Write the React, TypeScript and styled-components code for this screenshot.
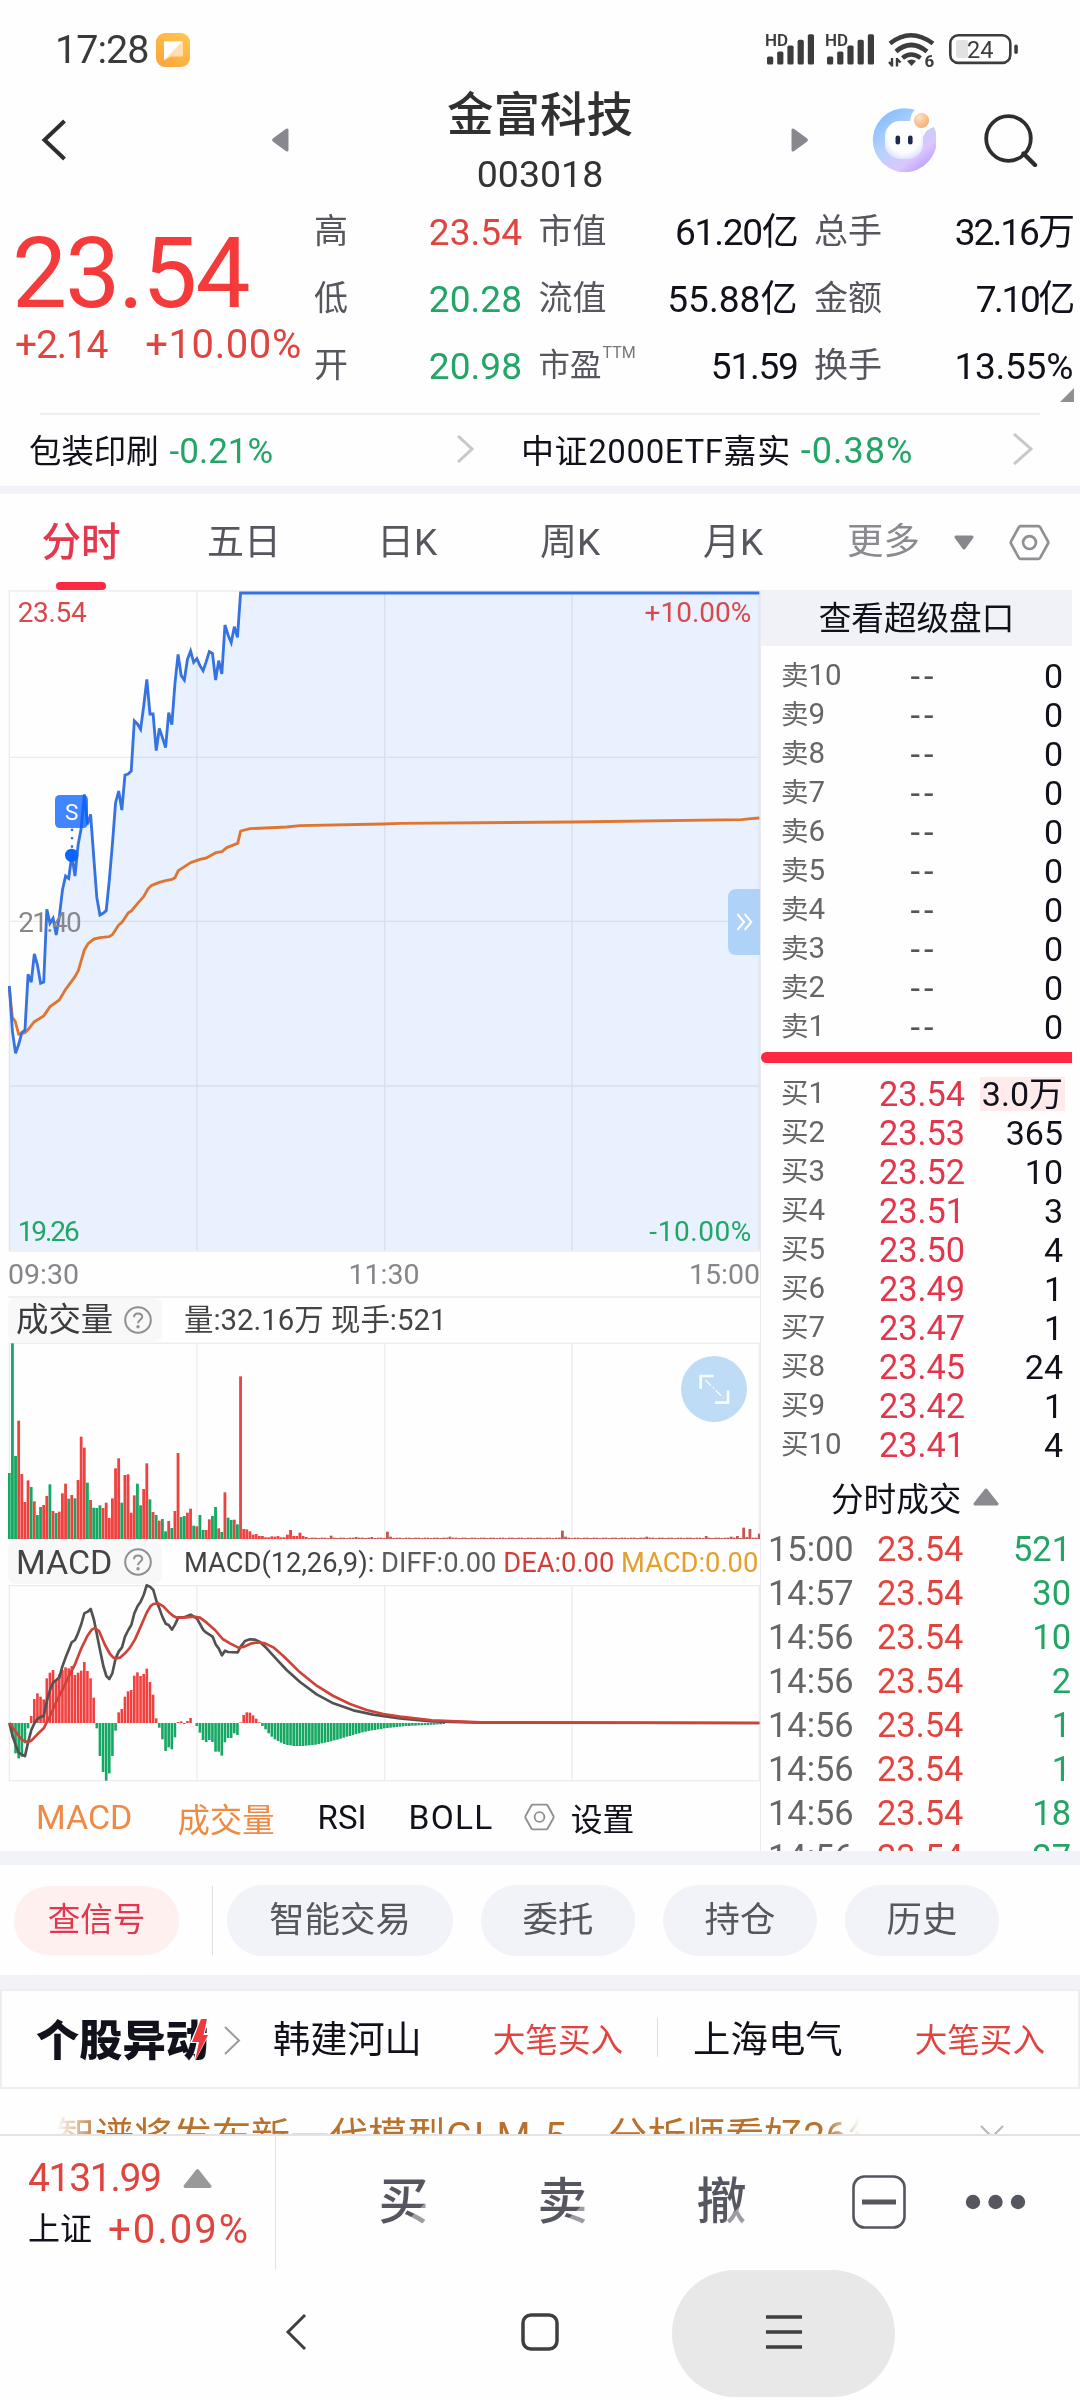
import React from "react";
import styled, { createGlobalStyle } from "styled-components";

const RED = "#e0443f";
const GREEN = "#22a565";
const INK = "#11111c";
const GREY = "#56575e";
const HOT = "#fd2842";
const BAND = "#f2f3f8";

const Global = createGlobalStyle`
  * { box-sizing: border-box; }
  body { margin: 0; background: #fff; font-family: Roboto, "Noto Sans CJK SC", sans-serif; color: ${INK}; }
  svg { display: block; flex: none; }
`;

const Screen = styled.div`
  width: 1080px;
  height: 2400px;
  overflow: hidden;
  display: flex;
  flex-direction: column;
  background: #fefefe;
`;

const Text = styled.span<{ $size: number; $color?: string; $ls?: number; $weight?: number; $ml?: number }>`
  font-size: ${(p) => p.$size}px;
  color: ${(p) => p.$color ?? INK};
  letter-spacing: ${(p) => p.$ls ?? 0}px;
  font-weight: ${(p) => p.$weight ?? 400};
  margin-left: ${(p) => p.$ml ?? 0}px;
  white-space: pre;
`;

const Gap = styled.div<{ $h: number }>`
  height: ${(p) => p.$h}px;
  flex: none;
  background: ${BAND};
`;

/* ---------- status bar ---------- */
const StatusBar = styled.header`
  height: 75px;
  flex: none;
  display: flex;
  align-items: center;
  justify-content: space-between;
  padding: 24px 62px 0 55px;
`;
const StatusSide = styled.div`
  display: flex;
  align-items: center;
`;
const StatusIcons = styled.svg`
  overflow: visible;
`;

const Signal = ({ x }: { x: number }) => (
  <g transform={`translate(${x} 0)`} fill="#3c3c3c">
    <text x="0" y="13.5" fontSize="17" fontWeight="600" textLength="23" fontFamily="Roboto, sans-serif">HD</text>
    {[8, 13, 19, 24.8, 30.4].map((h, i) => (
      <rect key={i} x={2 + i * 10.2} y={32.6 - h} width="6.2" height={h} rx="1.6" />
    ))}
  </g>
);

/* ---------- title bar ---------- */
const TitleBar = styled.nav`
  height: 124px;
  flex: none;
  display: grid;
  grid-template-columns: 271px 18px 502px 18px 271px;
`;
const IconCell = styled.div<{ $pl?: number }>`
  display: flex;
  align-items: center;
  padding: 6px 0 0 ${(p) => p.$pl ?? 0}px;
`;
const TitleBlock = styled.div`
  display: flex;
  flex-direction: column;
  align-items: center;
  padding-top: 10px;
`;
const Title = styled.h1`
  margin: 0;
  font-size: 46.5px;
  line-height: 60px;
  font-weight: 500;
  color: #303030;
`;
const Code = styled.div`
  margin-top: 4px;
  font-size: 37.5px;
  line-height: 50px;
  color: #333;
`;

/* ---------- quote ---------- */
const Quote = styled.section`
  position: relative;
  height: 214px;
  flex: none;
  display: flex;
`;
const PriceBlock = styled.div`
  width: 314px;
  padding: 25px 0 0 12px;
`;
const BigPrice = styled.div`
  font-size: 98px;
  line-height: 100px;
  letter-spacing: -1.9px;
  color: #f43a3a;
`;
const Changes = styled.div`
  display: flex;
  line-height: 42px;
  padding-left: 3px;
`;
const Stats = styled.div`
  display: grid;
  grid-template-columns: 208px 259px 259px;
  grid-auto-rows: 67px;
  column-gap: 16.5px;
`;
const Stat = styled.div`
  display: flex;
  align-items: center;
  justify-content: space-between;
  line-height: 42px;
`;
const StatLabel = styled.span`
  padding-top: 3px;
`;
const StatValue = styled.span<{ $color: string; $ls: number }>`
  font-size: 37.1px;
  color: ${(p) => p.$color};
  letter-spacing: ${(p) => p.$ls}px;
`;
const Sup = styled.sup`
  font-size: 16px;
  line-height: 0;
  vertical-align: 18px;
  color: #777;
  margin-left: 1px;
`;
const Corner = styled.svg`
  position: absolute;
  right: 6px;
  bottom: 11px;
`;
const Sectors = styled.section`
  height: 73px;
  flex: none;
  display: flex;
  align-items: center;
  margin: 0 40px;
  padding-bottom: 4px;
  border-top: 2px solid #efeff1;
`;
const Sector = styled.div<{ $w: number }>`
  width: ${(p) => p.$w}px;
  flex: none;
  display: flex;
  align-items: center;
  justify-content: space-between;
`;

/* ---------- period tabs ---------- */
const Tabs = styled.nav`
  height: 96px;
  flex: none;
  display: flex;
  align-items: center;
`;
const Tab = styled.div<{ $on?: boolean }>`
  position: relative;
  width: 163px;
  height: 96px;
  line-height: 98px;
  text-align: center;
  font-size: ${(p) => (p.$on ? 39.6 : 37)}px;
  font-weight: ${(p) => (p.$on ? 500 : 400)};
  color: ${(p) => (p.$on ? "#e53850" : GREY)};
  padding-right: 1px;
  &::after {
    content: "";
    display: ${(p) => (p.$on ? "block" : "none")};
    position: absolute;
    left: 56px;
    bottom: 0;
    width: 50px;
    height: 8px;
    border-radius: 4px;
    background: ${HOT};
  }
`;
const More = styled.div`
  display: flex;
  align-items: center;
  padding-left: 32px;
  color: #8a8a90;
  font-size: 36.5px;
  line-height: 96px;
`;

/* ---------- main ---------- */
const Main = styled.main`
  height: 1261px;
  flex: none;
  display: flex;
  overflow: hidden;
`;
const Charts = styled.section`
  width: 761px;
  flex: none;
  padding-left: 8px;
  border-right: 1px solid #ebebee;
`;
const TimeAxis = styled.div`
  height: 46px;
  display: flex;
  align-items: center;
  justify-content: space-between;
  border-bottom: 2px solid #f0f0f0;
  font-size: 28.5px;
  color: #85858a;
`;
const ChartHead = styled.div<{ $h: number }>`
  height: ${(p) => p.$h}px;
  display: flex;
  align-items: center;
  white-space: pre;
  line-height: 40px;
`;
const HeadChip = styled.div`
  width: 154px;
  height: 100%;
  display: flex;
  align-items: center;
  justify-content: space-between;
  padding: 0 10px 1px 8px;
  margin-right: 22px;
  border-radius: 8px;
  background: #f8f8f8;
`;
const Indicators = styled.div`
  height: 68px;
  display: flex;
  align-items: center;
  padding-left: 28px;
`;

/* ---------- order book ---------- */
const Book = styled.aside`
  width: 311px;
  overflow: hidden;
`;
const BookHead = styled.div`
  height: 56px;
  line-height: 58px;
  text-align: center;
  font-size: 32.6px;
  background: #f1f2f7;
  margin-bottom: 9px;
`;
const Level = styled.div`
  height: 39px;
  display: grid;
  grid-template-columns: 77px 128px minmax(0, 1fr);
  align-items: center;
  padding: 0 7px 0 20px;
  line-height: 40px;
`;
const LevelName = styled.span`
  font-size: 27.5px;
  color: #666;
  white-space: nowrap;
`;
const LevelNo = styled.span`
  font-size: 29.5px;
`;
const LevelPrice = styled.span<{ $empty?: boolean }>`
  text-align: center;
  font-size: 34.3px;
  letter-spacing: ${(p) => (p.$empty ? 4 : 0)}px;
  padding-left: ${(p) => (p.$empty ? 4 : 0)}px;
  color: ${(p) => (p.$empty ? "#555" : "#e2364c")};
`;
const LevelQty = styled.span<{ $hl?: boolean }>`
  justify-self: end;
  font-size: 34px;
  line-height: 34px;
  padding: 0 2px;
  white-space: nowrap;
  background: ${(p) => (p.$hl ? "#ffebec" : "transparent")};
`;
const Bar = styled.div`
  height: 11px;
  margin: 7px 0 10px;
  border-radius: 6px 0 0 6px;
  background: ${HOT};
`;
const TicksHead = styled.div`
  height: 63px;
  padding: 4px 0 0 70px;
  display: flex;
  align-items: center;
  font-size: 32.6px;
`;
const Tick = styled.div`
  height: 44px;
  display: grid;
  grid-template-columns: 109px 92px 1fr;
  align-items: center;
  padding: 2px 1px 0 7px;
  font-size: 34.4px;
  line-height: 42px;
`;

/* ---------- shortcuts ---------- */
const Shortcuts = styled.section`
  height: 110px;
  flex: none;
  display: flex;
  align-items: center;
  padding-left: 14px;
`;
const Pill = styled.div<{ $w: number; $hot?: boolean; $mr?: number }>`
  width: ${(p) => p.$w}px;
  height: ${(p) => (p.$hot ? 69 : 71)}px;
  line-height: ${(p) => (p.$hot ? 68 : 70)}px;
  margin-right: ${(p) => p.$mr ?? 28}px;
  border-radius: 36px;
  text-align: center;
  font-size: ${(p) => (p.$hot ? 32.6 : 35.4)}px;
  color: ${(p) => (p.$hot ? "#e2374c" : GREY)};
  background: ${(p) => (p.$hot ? "#fff0f0" : BAND)};
`;
const VRule = styled.div<{ $h: number; $m: string }>`
  width: 1px;
  height: ${(p) => p.$h}px;
  margin: ${(p) => p.$m};
  background: #dedee2;
`;

/* ---------- movers ---------- */
const Movers = styled.section`
  height: 100px;
  flex: none;
  display: flex;
  align-items: center;
  padding: 0 0 4px 34px;
  border: 2px solid #eeeeef;
`;
const MoversLogo = styled.div`
  position: relative;
  width: 174px;
  font-size: 43.2px;
  font-weight: 900;
  white-space: nowrap;
  color: #12121d;
`;
const Bolt = styled.svg`
  position: absolute;
  right: 0;
  top: 7px;
`;

const News = styled.section`
  height: 45px;
  flex: none;
  display: flex;
  align-items: flex-start;
  overflow: hidden;
`;
const NewsText = styled.div`
  width: 804px;
  margin-left: 56px;
  line-height: 97px;
  font-size: 39px;
  color: #b8722d;
  white-space: nowrap;
  overflow: hidden;
  mask-image: linear-gradient(90deg, transparent 0, #000 44px, #000 770px, transparent 804px);
`;
const Model = styled.span`
  letter-spacing: 1.5px;
`;
const NewsClose = styled.svg`
  margin: 35px 0 0 119px;
`;

/* ---------- bottom bar ---------- */
const BottomBar = styled.footer`
  height: 136px;
  flex: none;
  display: flex;
  border-top: 2px solid #e4e4e6;
`;
const IndexBox = styled.div`
  width: 276px;
  padding: 17px 0 0 28px;
  border-right: 1px solid #e2e2e4;
`;
const IndexLine = styled.div`
  height: 51px;
  line-height: 51px;
  display: flex;
  align-items: center;
  white-space: pre;
`;
const Actions = styled.div`
  flex: 1;
  display: flex;
  align-items: center;
  padding: 0 0 2px 48px;
`;
const Action = styled.div`
  width: 159px;
  text-align: center;
  font-size: 50px;
  line-height: 60px;
  font-weight: 500;
`;
const ActionGlyph = styled.span`
  color: transparent;
  background: linear-gradient(135deg, #55565f 70%, #9c9ca2 71%);
  background-clip: text;
  -webkit-background-clip: text;
`;
const SystemNav = styled.div`
  height: 130px;
  flex: none;
  display: flex;
  align-items: flex-start;
  overflow: hidden;
`;
const NavCell = styled.div<{ $ml: number; $w: number; $on?: boolean }>`
  width: ${(p) => p.$w}px;
  height: 127px;
  padding-bottom: 3px;
  margin-left: ${(p) => p.$ml}px;
  display: flex;
  align-items: center;
  justify-content: center;
  border-radius: 64px;
  background: ${(p) => (p.$on ? "#e8e8e8" : "transparent")};
`;

/* ---------- small drawings ---------- */
const Chevron = ({ w, h, color = "#c8c8cc", sw = 3 }: { w: number; h: number; color?: string; sw?: number }) => (
  <svg width={w} height={h} viewBox={`0 0 ${w} ${h}`} fill="none" stroke={color} strokeWidth={sw}>
    <path d={`M2 1 L${w - 2} ${h / 2} L2 ${h - 1}`} />
  </svg>
);
const Hexagon = ({ w, h, sw, ml = 0 }: { w: number; h: number; sw: number; ml?: number }) => (
  <svg width={w} height={h} viewBox="0 0 40 36" fill="none" stroke="#8f8f94" strokeWidth={sw} strokeLinejoin="round" style={{ marginLeft: ml }}>
    <path d="M11.5 2 H28.5 Q29.8 2 30.5 3.2 L38 16.8 Q38.6 18 38 19.2 L30.5 32.8 Q29.8 34 28.5 34 H11.5 Q10.2 34 9.5 32.8 L2 19.2 Q1.4 18 2 16.8 L9.5 3.2 Q10.2 2 11.5 2Z" />
    <circle cx="20" cy="18" r="6.3" />
  </svg>
);
const Help = () => (
  <svg width="28" height="28" viewBox="0 0 28 28" fill="none" stroke="#8f8f94" strokeWidth="2">
    <circle cx="14" cy="14" r="12.8" />
    <path d="M10 11.2 C10 8.6 11.8 7.4 14 7.4 C16.4 7.4 18.2 8.9 18.2 11 C18.2 13.6 14 14 14 17.2" />
    <circle cx="14" cy="20.8" r="0.7" fill="#8f8f94" />
  </svg>
);
const Up = ({ w, h, ml, color = "#8a8a90" }: { w: number; h: number; ml: number; color?: string }) => (
  <svg width={w} height={h} viewBox="0 0 26 18" style={{ marginLeft: ml }}>
    <path d="M13 2 L24 16 H2Z" fill={color} stroke={color} strokeWidth="3" strokeLinejoin="round" />
  </svg>
);

/* ---------- chart data: one sample a minute, three units a pixel ---------- */
const X0 = 28;
const STEP = 9.375;
const at = (i: number) => X0 + STEP * i;

const PRICE = [
  1218, 1355, 1420, 1393, 1358, 1350, 1183, 1207, 1122, 1155, 1210, 1206, 988, 1030, 1015, 1065, 1010, 930, 888, 895, 825,
  888, 795, 745, 643, 733, 703, 830, 953, 1005, 1000, 992, 900, 790, 668, 633, 690, 585, 582, 573, 423, 432, 448, 378, 298,
  402, 402, 512, 445, 473, 503, 398, 434, 310, 223, 287, 300, 238, 213, 247, 236, 257, 272, 245, 215, 220, 300, 242, 282,
  135, 165, 188, 140, 172, 39,
];
const AVG: [number, number][] = [
  [28, 1225], [37, 1312], [46, 1325], [56, 1363], [75, 1358], [85, 1348], [103, 1325], [131, 1308], [150, 1280], [178, 1260],
  [197, 1228], [225, 1190], [235, 1172], [253, 1110], [265, 1090], [282, 1077], [300, 1073], [328, 1070], [338, 1063],
  [356, 1035], [366, 1027], [385, 998], [394, 993], [413, 970], [431, 950], [443, 928], [455, 916], [478, 907], [497, 902],
  [516, 898], [525, 893], [535, 872], [572, 848], [600, 838], [619, 834], [647, 818], [666, 815], [680, 803], [713, 790],
  [722, 753], [750, 746], [860, 741], [900, 737], [1150, 732], [1200, 730], [1716, 726], [2225, 719], [2253, 716], [2278, 714],
];
const VOLUME =
  "g429 g40 g378 r272 r432 r516 r451 g471 r514 g555 g531 r525 r498 g463 r543 g549 r545 r490 r461 g506 r495 g505 r450 r320 r353 g458 r510 g533 g534 g526 r534 r518 r564 r505 r415 r385 g518 r435 r433 r548 r496 g461 g526 r477 r400 g508 r546 g555 r572 g567 g604 r573 g594 r543 r369 g561 g558 r548 r536 g587 r589 g555 g600 r600 r568 g558 g531 r595 g606 r487 g563 g570 r569 g583 r139 r597 r598 r604 r614 r612 r618 r618 r622 r622 r619 r620 r618 r622 r622 r614 r600 r618 r618 r608 r618 r621"
    .split(" ");
const LATE_VOLUME: Record<number, number> = {
  103: 617, 111: 621, 116: 621, 121: 605, 122: 620, 141: 620, 177: 602, 178: 620, 204: 620, 223: 618, 231: 620, 233: 618,
  235: 593, 236: 621, 237: 597, 240: 611,
};
const DIFF: [number, number][] = [
  [28, 1179], [37, 1215], [47, 1245], [56, 1268], [66, 1274], [75, 1278], [84, 1238], [94, 1200], [103, 1180], [112, 1167],
  [122, 1161], [131, 1158], [140, 1115], [150, 1080], [159, 1058], [169, 1050], [178, 1042], [187, 1010], [197, 982],
  [206, 960], [215, 937], [225, 930], [234, 910], [244, 882], [253, 850], [263, 845], [272, 837], [282, 870], [291, 915],
  [300, 960], [310, 1008], [319, 1038], [328, 1047], [337, 1030], [347, 985], [356, 965], [366, 952], [375, 920],
  [385, 900], [394, 885], [403, 850], [413, 828], [422, 815], [431, 795], [440, 766], [450, 770], [460, 780], [469, 812],
  [478, 835], [487, 860], [497, 881], [506, 885], [516, 899], [525, 884], [535, 862], [553, 862], [572, 854], [591, 866],
  [610, 900], [619, 908], [638, 920], [647, 943], [656, 955], [666, 976], [675, 962], [684, 966], [713, 967], [722, 950],
  [735, 933], [750, 928], [765, 929], [780, 936], [800, 955], [830, 988], [860, 1020], [900, 1056], [950, 1093],
  [1000, 1120], [1060, 1141], [1120, 1154], [1200, 1165], [1296, 1174], [1443, 1178], [2278, 1179],
];
const DEA: [number, number][] = [
  [28, 1179], [47, 1205], [66, 1230], [84, 1237], [94, 1232], [112, 1213], [131, 1195], [150, 1158], [169, 1115],
  [187, 1080], [206, 1040], [225, 1003], [244, 955], [262, 918], [275, 899], [285, 894], [297, 903], [315, 945], [330, 972],
  [340, 983], [348, 985], [360, 983], [375, 970], [390, 953], [405, 928], [422, 890], [440, 848], [452, 828], [460, 822],
  [475, 820], [490, 829], [505, 845], [520, 858], [530, 863], [550, 863], [580, 860], [600, 863], [620, 878], [645, 900],
  [668, 927], [690, 940], [715, 953], [730, 951], [755, 940], [775, 937], [795, 940], [820, 952], [850, 978], [900, 1027],
  [950, 1067], [1000, 1098], [1050, 1122], [1100, 1140], [1150, 1152], [1200, 1160], [1296, 1171], [1443, 1177], [2278, 1179],
];
const HIST = [
  1179, 1222, 1270, 1285, 1280, 1240, 1195, 1158, 1107, 1090, 1100, 1108, 1045, 1028, 1020, 1050, 1033, 1020, 1012, 1015,
  1008, 1035, 1028, 1022, 996, 1023, 1045, 1103, 1195, 1278, 1326, 1352, 1330, 1278, 1202, 1147, 1137, 1100, 1084, 1080,
  1037, 1027, 1038, 1032, 1016, 1056, 1094, 1165, 1193, 1228, 1263, 1252, 1258, 1222, 1176, 1174, 1182, 1173, 1164, 1179,
  1188, 1208, 1230, 1236, 1230, 1236, 1265, 1265, 1277, 1237, 1224, 1224, 1210, 1215, 1177, 1155, 1147, 1148, 1156, 1166,
  1177, 1188, 1198, 1210, 1220, 1228, 1233, 1238, 1242, 1245, 1246, 1248, 1248, 1248, 1248, 1247, 1246, 1245, 1244, 1242,
  1240, 1238, 1236, 1234, 1231, 1229, 1226, 1223, 1220, 1218, 1215, 1212, 1210, 1207, 1205, 1203, 1201, 1200, 1198, 1197,
  1195, 1194, 1193, 1192, 1191, 1190, 1189, 1188, 1188, 1187, 1187, 1186, 1186, 1185, 1185, 1184, 1184, 1183, 1183, 1182,
];
const ZERO = 1179;

const path = (pts: [number, number][]) => "M" + pts.map((p) => p.join(" ")).join("L");
const pricePts: [number, number][] = [...PRICE.map((y, i): [number, number] => [at(i), y]), [2278, 39]];

const Grid = ({ top, bottom, rows = [] }: { top: number; bottom: number; rows?: number[] }) => (
  <g stroke="#ececee" strokeWidth="4" fill="none">
    <rect x="28" y={top} width="2250" height={bottom - top} />
    {[591, 1154, 1716].map((x) => (
      <path key={x} d={`M${x} ${top}V${bottom}`} />
    ))}
    {rows.map((y) => (
      <path key={y} d={`M28 ${y}H2278`} />
    ))}
  </g>
);

const PriceChart = () => (
  <svg width="752" height="662" viewBox="24 30 2256 1986" fontFamily="Roboto, sans-serif" fontSize="84">
    <path d={path(pricePts) + "L2278 2010 28 2010Z"} fill="#e9f1fe" />
    <g style={{ mixBlendMode: "multiply" }}>
      <Grid top={33} bottom={2013} rows={[532, 1024, 1518]} />
    </g>
    <path d={path(AVG)} fill="none" stroke="#e0752f" strokeWidth="8.5" strokeLinejoin="round" />
    <path d={path(pricePts)} fill="none" stroke="#3572e2" strokeWidth="8.5" />
    <text x="55" y="1056" fill="#88888c" textLength="190">21.40</text>
    <rect x="165" y="645" width="99" height="99" rx="14" fill="#0c63ff" opacity="0.78" />
    <path d="M216 746V806" stroke="#2a6ff0" strokeWidth="7" strokeDasharray="7 18" />
    <circle cx="215" cy="826" r="20" fill="#0a64ff" />
    <text x="215" y="719" fill="#fff" fontSize="68" textAnchor="middle">S</text>
    <text x="53" y="126" fill="#d9484a" textLength="207">23.54</text>
    <text x="2254" y="126" fill="#d9484a" textAnchor="end">+10.00%</text>
    <text x="53" y="1983" fill={GREEN} textLength="186">19.26</text>
    <text x="1948" y="1983" fill={GREEN} textLength="306">-10.00%</text>
    <path d="M2280 927H2210Q2184 927 2184 953V1099Q2184 1125 2210 1125H2280Z" fill="#aed2f8" />
    <path d="M2212 1002L2232 1026 2212 1050M2234 1002L2254 1026 2234 1050" fill="none" stroke="#fff" strokeWidth="6" />
  </svg>
);

const VolumeChart = () => (
  <svg width="752" height="199" viewBox="24 36 2256 597">
    <Grid top={40} bottom={626} />
    {Array.from({ length: 241 }, (_, i) => {
      const item = VOLUME[i];
      const y = item ? Number(item.slice(1)) : LATE_VOLUME[i] ?? 623 + (i % 3 === 0 ? 1 : 0);
      const green = item?.[0] === "g";
      return <rect key={i} x={at(i) - 4.3} y={y} width="8.4" height={627 - y} fill={green ? "#14a862" : i > 95 ? "#c9534f" : "#ef413f"} />;
    })}
    <circle cx="2142" cy="177" r="99" fill="#bfdcf6" />
    <g stroke="#fff" strokeOpacity="0.9" fill="none" strokeWidth="8">
      <path d="M2102 176V138H2141" />
      <path d="M2184 181V218H2145" />
      <path d="M2116 150L2170 204" strokeWidth="4" strokeDasharray="24 7 5 7" />
    </g>
  </svg>
);

const MacdChart = () => (
  <svg width="752" height="199" viewBox="24 762 2256 597">
    <Grid top={767} bottom={1352} />
    {HIST.map((y, i) => (
      <rect key={i} x={at(i) - 4} y={Math.min(y, ZERO)} width="7.8" height={Math.abs(y - ZERO)} fill={y < ZERO ? "#f2403f" : "#14a862"} />
    ))}
    <path d={path(DIFF)} fill="none" stroke="#525252" strokeWidth="8" strokeLinejoin="round" />
    <path d={path(DEA)} fill="none" stroke="#cf423a" strokeWidth="8" strokeLinejoin="round" />
  </svg>
);

/* ---------- table data ---------- */
const STATS: [string, string, string, number][] = [
  ["高", "23.54", RED, 0],
  ["市值", "61.20亿", INK, -1.3],
  ["总手", "32.16万", INK, -2],
  ["低", "20.28", GREEN, 0],
  ["流值", "55.88亿", INK, 0],
  ["金额", "7.10亿", INK, -2.4],
  ["开", "20.98", GREEN, 0],
  ["市盈", "51.59", INK, -1.3],
  ["换手", "13.55%", INK, -0.3],
];
const SELLS = [10, 9, 8, 7, 6, 5, 4, 3, 2, 1];
const BUYS: [string, string][] = [
  ["23.54", "3.0万"], ["23.53", "365"], ["23.52", "10"], ["23.51", "3"], ["23.50", "4"],
  ["23.49", "1"], ["23.47", "1"], ["23.45", "24"], ["23.42", "1"], ["23.41", "4"],
];
const TICKS: [string, string][] = [
  ["15:00", "521"], ["14:57", "30"], ["14:56", "10"], ["14:56", "2"],
  ["14:56", "1"], ["14:56", "1"], ["14:56", "18"], ["14:56", "27"],
];

const Right = styled.span<{ $color: string }>`
  color: ${(p) => p.$color};
  justify-self: end;
`;
const Cell = styled.span<{ $color: string }>`
  color: ${(p) => p.$color};
`;

export default function App() {
  return (
    <Screen>
      <Global />
      <StatusBar>
        <StatusSide>
          <Text $size={39.5} $color="#3a3a3a" $ls={-1}>17:28</Text>
          <svg width="34" height="34" viewBox="0 0 34 34" style={{ marginLeft: 8 }}>
            <defs>
              <linearGradient id="note" x1="1" y1="0" x2="0.3" y2="1">
                <stop offset="0" stopColor="#ffc94f" />
                <stop offset="1" stopColor="#fda63c" />
              </linearGradient>
            </defs>
            <rect width="34" height="34" rx="9" fill="url(#note)" />
            <path d="M8 8.5H26Q27 8.5 27 9.5V22.500Q27 23.500 26 23.500H15L9.500 26.500Q8 27 8 25.500Z" fill="#ffdfae" />
            <path d="M8 8.500H26L9 26.500Q8 27 8 25.500Z" fill="#fff" />
          </svg>
        </StatusSide>
        <StatusIcons width="254" height="44" viewBox="0 -4 254 44">
          <Signal x={1} />
          <Signal x={61} />
          <g fill="none" stroke="#3c3c3c" strokeWidth="4.6">
            <path d="M126 11.500Q146.500 -5 169 11.500" />
            <path d="M132 19.500Q147 6.500 163 19.500" />
            <path d="M138.500 26Q147 19 156.500 26" />
            <path d="M128 26V34.500M128.500 34L125 30M133 34.500V26M132.500 26.500L136.500 30.500" strokeWidth="2.400" />
          </g>
          <path d="M143 29Q147.500 26 152 29L147.500 34Z" fill="#3c3c3c" />
          <text x="160.500" y="35" fontSize="17" fontWeight="700" fill="#3c3c3c" fontFamily="Roboto, sans-serif">6</text>
          <rect x="186.300" y="3.300" width="60" height="27.600" rx="8" fill="none" stroke="#3c3c3c" strokeWidth="2.600" />
          <rect x="192" y="8" width="12" height="18" rx="2" fill="#e2e2e2" />
          <rect x="250.300" y="12.500" width="3.500" height="9.500" rx="1.700" fill="#3c3c3c" />
          <text x="203" y="25.600" fontSize="23.500" fill="#3c3c3c" fontFamily="Roboto, sans-serif">24</text>
        </StatusIcons>
      </StatusBar>

      <TitleBar>
        <IconCell $pl={41}>
          <svg width="27" height="42" viewBox="0 0 27 42" fill="none" stroke="#2e2e2e" strokeWidth="4">
            <path d="M23.500 2L3.500 21L23.500 40" />
          </svg>
        </IconCell>
        <IconCell>
          <svg width="18" height="26" viewBox="0 0 18 26">
            <path d="M16 3V23L3 13.500Q2.300 13 3 12.500Z" fill="#88878d" stroke="#88878d" strokeWidth="3" strokeLinejoin="round" />
          </svg>
        </IconCell>
        <TitleBlock>
          <Title>金富科技</Title>
          <Code>003018</Code>
        </TitleBlock>
        <IconCell>
          <svg width="18" height="26" viewBox="0 0 18 26">
            <path d="M2 3V23L15 13.500Q15.700 13 15 12.500Z" fill="#88878d" stroke="#88878d" strokeWidth="3" strokeLinejoin="round" />
          </svg>
        </IconCell>
        <IconCell $pl={63}>
          <svg width="64" height="64" viewBox="0 0 64 64">
            <defs>
              <linearGradient id="ring" x1="0.1" y1="0.1" x2="0.75" y2="0.95">
                <stop offset="0" stopColor="#86bdfd" />
                <stop offset="0.450" stopColor="#b5d3fd" />
                <stop offset="0.800" stopColor="#dcc6fc" />
                <stop offset="1" stopColor="#c0a6ff" />
              </linearGradient>
              <radialGradient id="face" cx="0.5" cy="0.400" r="0.650">
                <stop offset="0.650" stopColor="#fff" />
                <stop offset="1" stopColor="#d6dffc" />
              </radialGradient>
              <radialGradient id="ball" cx="0.350" cy="0.300" r="0.800">
                <stop offset="0" stopColor="#ffe0c4" />
                <stop offset="1" stopColor="#f9a869" />
              </radialGradient>
            </defs>
            <path d="M43 1.800A32 32 0 1 0 62 19Q54 21 51 29L38 13Q39 5 43 1.800Z" fill="url(#ring)" />
            <circle cx="49.500" cy="12.500" r="10" fill="#fff" />
            <rect x="13" y="13" width="38" height="38" rx="15" fill="url(#face)" />
            <circle cx="49.500" cy="12.500" r="7.600" fill="url(#ball)" />
            <rect x="23.500" y="27.500" width="4.600" height="9" rx="2.300" fill="#1f2b4d" />
            <rect x="36" y="27.500" width="4.600" height="9" rx="2.300" fill="#1f2b4d" />
          </svg>
          <svg width="54" height="54" viewBox="0 0 54 54" fill="none" stroke="#2e2e2e" strokeWidth="3.800" style={{ marginLeft: 48 }}>
            <circle cx="24.500" cy="25.500" r="22.300" />
            <path d="M39.500 40.500L51 52" strokeLinecap="round" strokeWidth="4.400" />
          </svg>
        </IconCell>
      </TitleBar>

      <Quote>
        <PriceBlock>
          <BigPrice>23.54</BigPrice>
          <Changes>
            <Text $size={39} $color={RED} $ls={-1.2}>+2.14</Text>
            <Text $size={40} $color={RED} $ml={38} $ls={0.6}>+10.00%</Text>
          </Changes>
        </PriceBlock>
        <Stats>
          {STATS.map(([label, value, color, ls]) => (
            <Stat key={value}>
              <StatLabel>
                <Text $size={label === "市盈" ? 31.5 : 34} $color={GREY}>{label}</Text>
                {label === "市盈" && <Sup>TTM</Sup>}
              </StatLabel>
              <StatValue $color={color} $ls={ls}>{value}</StatValue>
            </Stat>
          ))}
        </Stats>
        <Corner width="14" height="14"><path d="M14 0V14H0Z" fill="#8f8f94" /></Corner>
      </Quote>
      <Sectors>
        <Sector $w={434}>
          <span>
            <Text $size={32.4} $ml={-11}>包装印刷</Text>
            <Text $size={35} $color={GREEN} $ml={11}>-0.21%</Text>
          </span>
          <Chevron w={18} h={28} />
        </Sector>
        <Sector $w={559}>
          <span>
            <Text $size={33} $ml={47} $ls={0.6}>中证2000ETF嘉实</Text>
            <Text $size={36} $color={GREEN} $ml={10} $ls={1}>-0.38%</Text>
          </span>
          <Chevron w={21} h={32} />
        </Sector>
      </Sectors>
      <Gap $h={8} />

      <Tabs>
        <Tab $on>分时</Tab>
        <Tab>五日</Tab>
        <Tab>日K</Tab>
        <Tab>周K</Tab>
        <Tab>月K</Tab>
        <More>
          更多
          <svg width="20" height="15" viewBox="0 0 20 15" style={{ marginLeft: 34 }}>
            <path d="M2 2H18L10 13Z" fill="#88878d" stroke="#88878d" strokeWidth="3" strokeLinejoin="round" />
          </svg>
          <Hexagon w={41} h={37} sw={2.6} ml={35} />
        </More>
      </Tabs>

      <Main>
        <Charts>
          <PriceChart />
          <TimeAxis>
            <span>09:30</span>
            <span>11:30</span>
            <span>15:00</span>
          </TimeAxis>
          <ChartHead $h={44}>
            <HeadChip>
              <Text $size={32.4} $color="#3c3c40">成交量</Text>
              <Help />
            </HeadChip>
            <Text $size={29.4} $color="#444">量:32.16万 现手:521</Text>
          </ChartHead>
          <VolumeChart />
          <ChartHead $h={43}>
            <HeadChip>
              <Text $size={34} $color="#444">MACD</Text>
              <Help />
            </HeadChip>
            <Text $size={27.3} $color="#444">MACD(12,26,9): </Text>
            <Text $size={27.3} $color="#5c5c5c">DIFF:0.00 </Text>
            <Text $size={27.3} $color="#d23f3b">DEA:0.00 </Text>
            <Text $size={27.3} $color="#e4a02c">MACD:0.00</Text>
          </ChartHead>
          <MacdChart />
          <Indicators>
            <Text $size={34} $color="#ef8a45">MACD</Text>
            <Text $size={32.4} $color="#ef8a45" $ml={45}>成交量</Text>
            <Text $size={33} $ml={43}>RSI</Text>
            <Text $size={33.5} $ml={42} $ls={1.3}>BOLL</Text>
            <Hexagon w={31} h={28} sw={2.4} ml={30} />
            <Text $size={31.8} $ml={16}>设置</Text>
          </Indicators>
        </Charts>
        <Book>
          <BookHead>查看超级盘口</BookHead>
          {SELLS.map((n) => (
            <Level key={n}>
              <LevelName>卖<LevelNo>{n}</LevelNo></LevelName>
              <LevelPrice $empty>--</LevelPrice>
              <LevelQty>0</LevelQty>
            </Level>
          ))}
          <Bar />
          {BUYS.map(([price, qty], i) => (
            <Level key={price}>
              <LevelName>买<LevelNo>{i + 1}</LevelNo></LevelName>
              <LevelPrice>{price}</LevelPrice>
              <LevelQty $hl={i === 0}>{qty}</LevelQty>
            </Level>
          ))}
          <TicksHead>
            分时成交
            <Up w={26} h={18} ml={12} />
          </TicksHead>
          {TICKS.map(([time, qty], i) => (
            <Tick key={i}>
              <Cell $color="#666">{time}</Cell>
              <Cell $color={RED}>23.54</Cell>
              <Right $color={GREEN}>{qty}</Right>
            </Tick>
          ))}
        </Book>
      </Main>
      <Gap $h={14} />

      <Shortcuts>
        <Pill $w={165} $hot $mr={0}>查信号</Pill>
        <VRule $h={69} $m="0 14px 0 33px" />
        <Pill $w={226}>智能交易</Pill>
        <Pill $w={154}>委托</Pill>
        <Pill $w={154}>持仓</Pill>
        <Pill $w={154}>历史</Pill>
      </Shortcuts>
      <Gap $h={14} />

      <Movers>
        <MoversLogo>
          个股异动
          <Bolt width="22" height="54" viewBox="0 0 22 54">
            <path d="M13 4H21L17 20H22L5 52L9 30H2Z" fill="#fff" />
            <path d="M13 6H19L15.500 22H20L7 48L11 29H4Z" fill="#f0393c" />
          </Bolt>
        </MoversLogo>
        <IconCell $pl={13}><Chevron w={18} h={29} color="#9a9a9f" sw={2} /></IconCell>
        <Text $size={37.200} $ml={32}>韩建河山</Text>
        <Text $size={32.600} $color={RED} $ml={71}>大笔买入</Text>
        <VRule $h={39} $m="0 35px 0 34px" />
        <Text $size={37.400}>上海电气</Text>
        <Text $size={32.600} $color={RED} $ml={72}>大笔买入</Text>
      </Movers>
      <News>
        <NewsText>智谱将发布新一代模型<Model>GLM-5，</Model>分析师看好26年</NewsText>
        <NewsClose width="26" height="26" viewBox="0 0 26 26" fill="none" stroke="#b5b5ba" strokeWidth="2">
          <path d="M2 2L24 24M24 2L2 24" />
        </NewsClose>
      </News>

      <BottomBar>
        <IndexBox>
          <IndexLine>
            <Text $size={39} $color={RED} $ls={-1.3}>4131.99</Text>
            <Up w={29} h={21} ml={22} color="#999" />
          </IndexLine>
          <IndexLine>
            <Text $size={32}>上证</Text>
            <Text $size={40} $color={RED} $ml={16} $ls={2}>+0.09%</Text>
          </IndexLine>
        </IndexBox>
        <Actions>
          <Action><ActionGlyph>买</ActionGlyph></Action>
          <Action><ActionGlyph>卖</ActionGlyph></Action>
          <Action><ActionGlyph>撤</ActionGlyph></Action>
          <svg width="54" height="54" viewBox="0 0 54 54" fill="none" stroke="#55565f" style={{ marginLeft: 51 }}>
            <rect x="1.500" y="1.500" width="51" height="51" rx="11" strokeWidth="2.600" />
            <path d="M10 27H44" strokeWidth="5" />
          </svg>
          <svg width="62" height="16" viewBox="0 0 62 16" fill="#55565f" style={{ marginLeft: 59 }}>
            <circle cx="8" cy="8" r="7.200" />
            <circle cx="30.500" cy="8" r="7.200" />
            <circle cx="53" cy="8" r="7.200" />
          </svg>
        </Actions>
      </BottomBar>
      <SystemNav>
        <NavCell $ml={245} $w={102}>
          <svg width="22" height="38" viewBox="0 0 22 38" fill="none" stroke="#3f3f3f" strokeWidth="3">
            <path d="M20 2L3 19L20 36" />
          </svg>
        </NavCell>
        <NavCell $ml={142} $w={102}>
          <svg width="38" height="38" viewBox="0 0 38 38" fill="none" stroke="#3f3f3f" strokeWidth="3.500">
            <rect x="2" y="2" width="34" height="34" rx="8" />
          </svg>
        </NavCell>
        <NavCell $ml={81} $w={223} $on>
          <svg width="38" height="36" viewBox="0 0 38 36" stroke="#3f3f3f" strokeWidth="3.600">
            <path d="M1 3H37M1 18H37M1 33H37" />
          </svg>
        </NavCell>
      </SystemNav>
    </Screen>
  );
}
